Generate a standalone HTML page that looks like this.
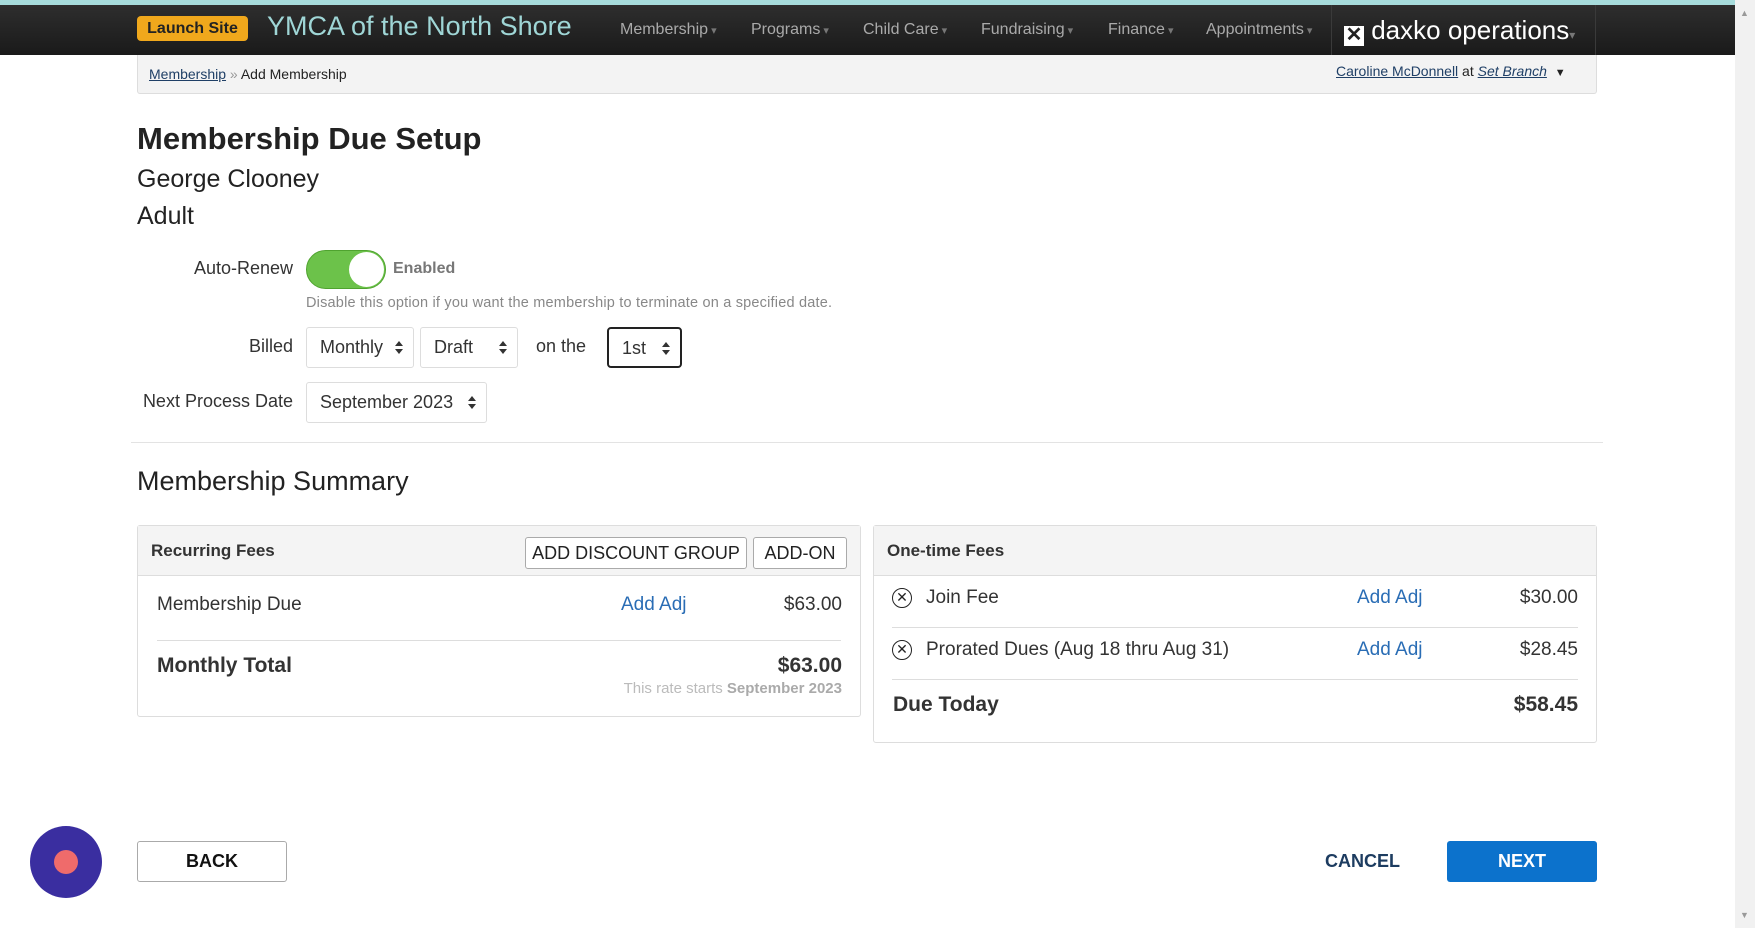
<!DOCTYPE html>
<html><head><meta charset="utf-8"><style>
*{box-sizing:border-box;margin:0;padding:0}
body{width:1755px;height:928px;overflow:hidden;background:#fff;font-family:"Liberation Sans",sans-serif;color:#222;position:relative}
.a{position:absolute;white-space:nowrap}
.top{left:0;top:0;width:1735px;height:5px;background:#a7dcdc}
.nav{left:0;top:5px;width:1735px;height:50px;background:linear-gradient(#2e2e2e,#1a1a1a)}
.badge{left:137px;top:16px;width:111px;height:25px;background:#f0a81c;border-radius:4px;font-size:16px;font-weight:bold;color:#222;text-align:center;line-height:25px}
.title{left:267px;top:11px;font-size:27px;color:#9fd6d6}
.ni{top:21px;font-size:16px;color:#aaa}
.ni:after{content:" ▾";font-size:11px;color:#777}
.dx{left:1331px;top:5px;width:265px;height:50px;border-left:1px solid #3a3a3a;border-right:1px solid #3a3a3a;color:#fff;font-size:26px;padding:10px 0 0 12px}
.bc{left:137px;top:55px;width:1460px;height:39px;background:#f3f3f3;border:1px solid #ddd;border-top:none;border-radius:0 0 3px 3px;font-size:14px}
.lbl{font-size:18px;color:#333;text-align:right}
.sel{border:1px solid #ddd;border-radius:3px;height:41px;font-size:18px;color:#333;line-height:39px;padding-left:13px}
.sel:after{content:"";position:absolute;right:10px;top:13px;border:4px solid transparent;border-bottom:5px solid #333;border-top:0}
.sel:before{content:"";position:absolute;right:10px;top:21px;border:4px solid transparent;border-top:5px solid #333;border-bottom:0}
.panel{border:1px solid #ddd;border-radius:3px;background:#fff}
.ph{position:absolute;left:0;top:0;right:0;height:50px;background:#f4f4f4;border-bottom:1px solid #ddd}
.bt{border:1px solid #aaa;border-radius:3px;background:#fff;font-size:18px;color:#222;text-align:center;height:32px;line-height:30px}
.blue{color:#2a6db5;font-size:19px}
.x{width:20px;height:20px;border:1.5px solid #222;border-radius:50%;font-size:14px;text-align:center;line-height:17px}
</style></head><body>
<div class="a top"></div>
<div class="a nav"></div>
<div class="a badge">Launch Site</div>
<div class="a title">YMCA of the North Shore</div>
<div class="a ni" style="left:620px">Membership</div>
<div class="a ni" style="left:751px">Programs</div>
<div class="a ni" style="left:863px">Child Care</div>
<div class="a ni" style="left:981px">Fundraising</div>
<div class="a ni" style="left:1108px">Finance</div>
<div class="a ni" style="left:1206px">Appointments</div>
<div class="a dx"><span style="display:inline-block;width:20px;height:20px;background:#fff;vertical-align:-2px;position:relative;color:#222;font-size:20px;line-height:18px;text-align:center;font-weight:bold">✕</span> daxko operations<span style="font-size:12px;color:#777">▾</span></div>
<div class="a bc"></div>
<div class="a" style="left:149px;top:66px;font-size:14px"><u style="color:#1f3f66">Membership</u> <span style="color:#999">»</span> Add Membership</div>
<div class="a" style="left:1336px;top:63px;font-size:14px"><u style="color:#1f3f66">Caroline McDonnell</u> at <i><u style="color:#1f3f66">Set Branch</u></i> &nbsp;<span style="font-size:11px">▼</span></div>
<div class="a" style="left:137px;top:121px;font-size:31px;font-weight:bold">Membership Due Setup</div>
<div class="a" style="left:137px;top:165px;font-size:25px">George Clooney</div>
<div class="a" style="left:137px;top:202px;font-size:25px">Adult</div>
<div class="a lbl" style="right:1462px;top:258px">Auto-Renew</div>
<div class="a" style="left:306px;top:250px;width:80px;height:39px;border-radius:20px;background:#6cc24a;border:1px solid #4fa32f"><div style="position:absolute;right:1px;top:1px;width:35px;height:35px;border-radius:50%;background:#fff"></div></div>
<div class="a" style="left:393px;top:260px;font-size:16px;font-weight:bold;color:#777">Enabled</div>
<div class="a" style="left:306px;top:295px;font-size:14.5px;color:#888;letter-spacing:0.2px">Disable this option if you want the membership to terminate on a specified date.</div>
<div class="a lbl" style="right:1462px;top:336px">Billed</div>
<div class="a sel" style="left:306px;top:327px;width:108px">Monthly</div>
<div class="a sel" style="left:420px;top:327px;width:98px">Draft</div>
<div class="a lbl" style="left:536px;top:336px">on the</div>
<div class="a sel" style="left:607px;top:327px;width:75px;border:2px solid #222;border-radius:4px">1st</div>
<div class="a lbl" style="right:1462px;top:391px">Next Process Date</div>
<div class="a sel" style="left:306px;top:382px;width:181px">September 2023</div>
<div class="a" style="left:131px;top:442px;width:1472px;height:1px;background:#e3e3e3"></div>
<div class="a" style="left:137px;top:466px;font-size:27px;color:#222">Membership Summary</div>

<div class="a panel" style="left:137px;top:525px;width:724px;height:192px">
<div class="ph"></div>
<div class="a" style="left:13px;top:15px;font-size:17px;font-weight:bold;color:#333">Recurring Fees</div>
<div class="a bt" style="left:387px;top:11px;width:222px">ADD DISCOUNT GROUP</div>
<div class="a bt" style="left:615px;top:11px;width:94px">ADD-ON</div>
<div class="a" style="left:19px;top:68px;font-size:19px;color:#333">Membership Due</div>
<div class="a blue" style="left:483px;top:68px">Add Adj</div>
<div class="a" style="right:18px;top:68px;font-size:19px;color:#333">$63.00</div>
<div class="a" style="left:19px;top:114px;width:684px;height:1px;background:#ddd"></div>
<div class="a" style="left:19px;top:128px;font-size:21px;font-weight:bold;color:#333">Monthly Total</div>
<div class="a" style="right:18px;top:128px;font-size:21px;font-weight:bold;color:#333">$63.00</div>
<div class="a" style="right:18px;top:154px;font-size:15px;color:#bbb">This rate starts <b style="color:#aaa">September 2023</b></div>
</div>

<div class="a panel" style="left:873px;top:525px;width:724px;height:218px">
<div class="ph"></div>
<div class="a" style="left:13px;top:15px;font-size:17px;font-weight:bold;color:#333">One-time Fees</div>
<div class="a x" style="left:18px;top:62px">✕</div>
<div class="a" style="left:52px;top:61px;font-size:19px;color:#333">Join Fee</div>
<div class="a blue" style="left:483px;top:61px">Add Adj</div>
<div class="a" style="right:18px;top:61px;font-size:19px;color:#333">$30.00</div>
<div class="a" style="left:18px;top:101px;width:686px;height:1px;background:#ddd"></div>
<div class="a x" style="left:18px;top:114px">✕</div>
<div class="a" style="left:52px;top:113px;font-size:19px;color:#333">Prorated Dues (Aug 18 thru Aug 31)</div>
<div class="a blue" style="left:483px;top:113px">Add Adj</div>
<div class="a" style="right:18px;top:113px;font-size:19px;color:#333">$28.45</div>
<div class="a" style="left:18px;top:153px;width:686px;height:1px;background:#ddd"></div>
<div class="a" style="left:19px;top:167px;font-size:21px;font-weight:bold;color:#333">Due Today</div>
<div class="a" style="right:18px;top:167px;font-size:21px;font-weight:bold;color:#333">$58.45</div>
</div>

<div class="a" style="left:30px;top:826px;width:72px;height:72px;border-radius:50%;background:#3a2ea0"><div style="position:absolute;left:24px;top:24px;width:24px;height:24px;border-radius:50%;background:#ef6b6b"></div></div>
<div class="a" style="left:137px;top:841px;width:150px;height:41px;border:1px solid #aaa;border-radius:3px;text-align:center;line-height:39px;font-size:18px;font-weight:bold;color:#111">BACK</div>
<div class="a" style="left:1325px;top:851px;font-size:18px;font-weight:bold;color:#1d3c60">CANCEL</div>
<div class="a" style="left:1447px;top:841px;width:150px;height:41px;border-radius:3px;background:#0c72cc;text-align:center;line-height:41px;font-size:18px;font-weight:bold;color:#fff">NEXT</div>
<div class="a" style="left:1735px;top:0;width:20px;height:928px;background:#f1f1f1"></div>
<div class="a" style="left:1740px;top:8px;font-size:9px;color:#999">▲</div>
<div class="a" style="left:1740px;top:910px;font-size:9px;color:#999">▼</div>
</body></html>
